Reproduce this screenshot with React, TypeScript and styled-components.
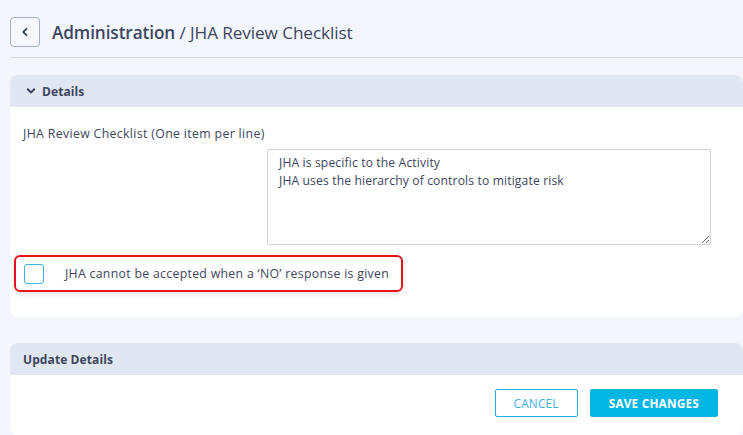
import * as React from 'react';
import styled, { createGlobalStyle } from 'styled-components';

const GlobalStyle = createGlobalStyle`
  html, body {
    margin: 0;
    padding: 0;
    background: #f3f6fd;
    font-family: "Open Sans", "Liberation Sans", sans-serif;
    color: #3d4660;
  }
  * { box-sizing: border-box; }
`;

const Page = styled.div`
  width: 743px;
  height: 435px;
  overflow: hidden;
  padding: 17px 0 0 10px;
`;

const Header = styled.div`
  display: flex;
  align-items: center;
  gap: 12px;
  height: 30px;
  margin-bottom: 10px;
`;

const BackButton = styled.button`
  width: 30px;
  height: 30px;
  padding: 0;
  display: flex;
  align-items: center;
  justify-content: center;
  background: #f6f8fd;
  border: 1px solid #a4afc8;
  border-radius: 4px;
  color: #3d4660;
  cursor: pointer;
`;

const Title = styled.h1`
  margin: 0;
  font-size: 17.2px;
  font-weight: 400;
  letter-spacing: -0.1px;
  color: #3d4660;

  strong {
    font-weight: 600;
  }
`;

const Divider = styled.hr`
  margin: 0 0 17px;
  border: 0;
  border-top: 1px solid #d5dae4;
`;

const Panel = styled.section<{ $gap?: number }>`
  background: #fff;
  border-radius: 8px;
  overflow: hidden;
  margin-bottom: ${p => p.$gap ?? 0}px;
`;

const PanelHead = styled.div<{ $indent: number }>`
  height: 32px;
  background: #e1e7f2;
  display: flex;
  align-items: center;
  gap: 6px;
  padding-left: ${p => p.$indent}px;
  font-size: 12px;
  font-weight: 700;
  letter-spacing: 0.1px;
  color: #3d4660;
`;

const PanelBody = styled.div`
  padding: 18px 32px 25px 13px;
`;

const Label = styled.div`
  font-size: 12.3px;
  letter-spacing: 0.35px;
  margin-bottom: 7px;
`;

const TextArea = styled.textarea`
  display: block;
  margin-left: 244px;
  width: 444px;
  height: 96px;
  padding: 4px 11px;
  border: 1px solid #cfd2d8;
  border-radius: 2px;
  font-family: inherit;
  font-size: 12.1px;
  line-height: 18px;
  letter-spacing: 0.15px;
  color: #3d4660;
  resize: vertical;
  outline: none;
`;

const CheckRow = styled.label`
  display: flex;
  align-items: center;
  gap: 21px;
  width: 389px;
  height: 37px;
  margin: 10px 0 0 -9px;
  padding-left: 8px;
  border: 2px solid #e8141c;
  border-radius: 6px;
  box-shadow: 0 2px 6px rgba(0, 0, 0, 0.12);
  font-size: 12.3px;
  letter-spacing: 0.3px;
  cursor: pointer;
`;

const Box = styled.span`
  width: 20px;
  height: 20px;
  border: 1px solid #38b4e2;
  border-radius: 3px;
  background: #fff;
`;

const Actions = styled.div`
  display: flex;
  justify-content: flex-end;
  gap: 12px;
  padding: 14px 25px 0 0;
  height: 60px;
`;

const Button = styled.button<{ $primary?: boolean }>`
  height: 28px;
  padding: 0 18px;
  border: 1px solid #1cb1e0;
  border-radius: 2px;
  background: ${p => (p.$primary ? '#00b6e3' : '#fff')};
  color: ${p => (p.$primary ? '#fff' : '#3bafdf')};
  font-family: inherit;
  font-size: 11.8px;
  font-weight: ${p => (p.$primary ? 700 : 400)};
  letter-spacing: 0.2px;
  text-transform: uppercase;
  cursor: pointer;
`;

export default function App() {
  const [checked, setChecked] = React.useState(false);

  return (
    <Page>
      <GlobalStyle />
      <Header>
        <BackButton aria-label="Back">
          <svg width="10" height="10" viewBox="0 0 10 10">
            <path d="M6.5 1.8 L3.3 5 L6.5 8.2" fill="none" stroke="#3d4660" strokeWidth="1.8" strokeLinecap="round" strokeLinejoin="round" />
          </svg>
        </BackButton>
        <Title>
          <strong>Administration</strong> / JHA Review Checklist
        </Title>
      </Header>
      <Divider />

      <Panel $gap={26}>
        <PanelHead $indent={16}>
          <svg width="10" height="10" viewBox="0 0 10 10">
            <path d="M1.8 3.3 L5 6.5 L8.2 3.3" fill="none" stroke="#3d4660" strokeWidth="2" strokeLinecap="round" strokeLinejoin="round" />
          </svg>
          Details
        </PanelHead>
        <PanelBody>
          <Label>JHA Review Checklist (One item per line)</Label>
          <TextArea
            defaultValue={'JHA is specific to the Activity\nJHA uses the hierarchy of controls to mitigate risk'}
          />
          <CheckRow onClick={() => setChecked(!checked)}>
            <Box />
            JHA cannot be accepted when a ‘NO’ response is given
          </CheckRow>
        </PanelBody>
      </Panel>

      <Panel>
        <PanelHead $indent={13}>Update Details</PanelHead>
        <Actions>
          <Button>Cancel</Button>
          <Button $primary>Save Changes</Button>
        </Actions>
      </Panel>
    </Page>
  );
}
